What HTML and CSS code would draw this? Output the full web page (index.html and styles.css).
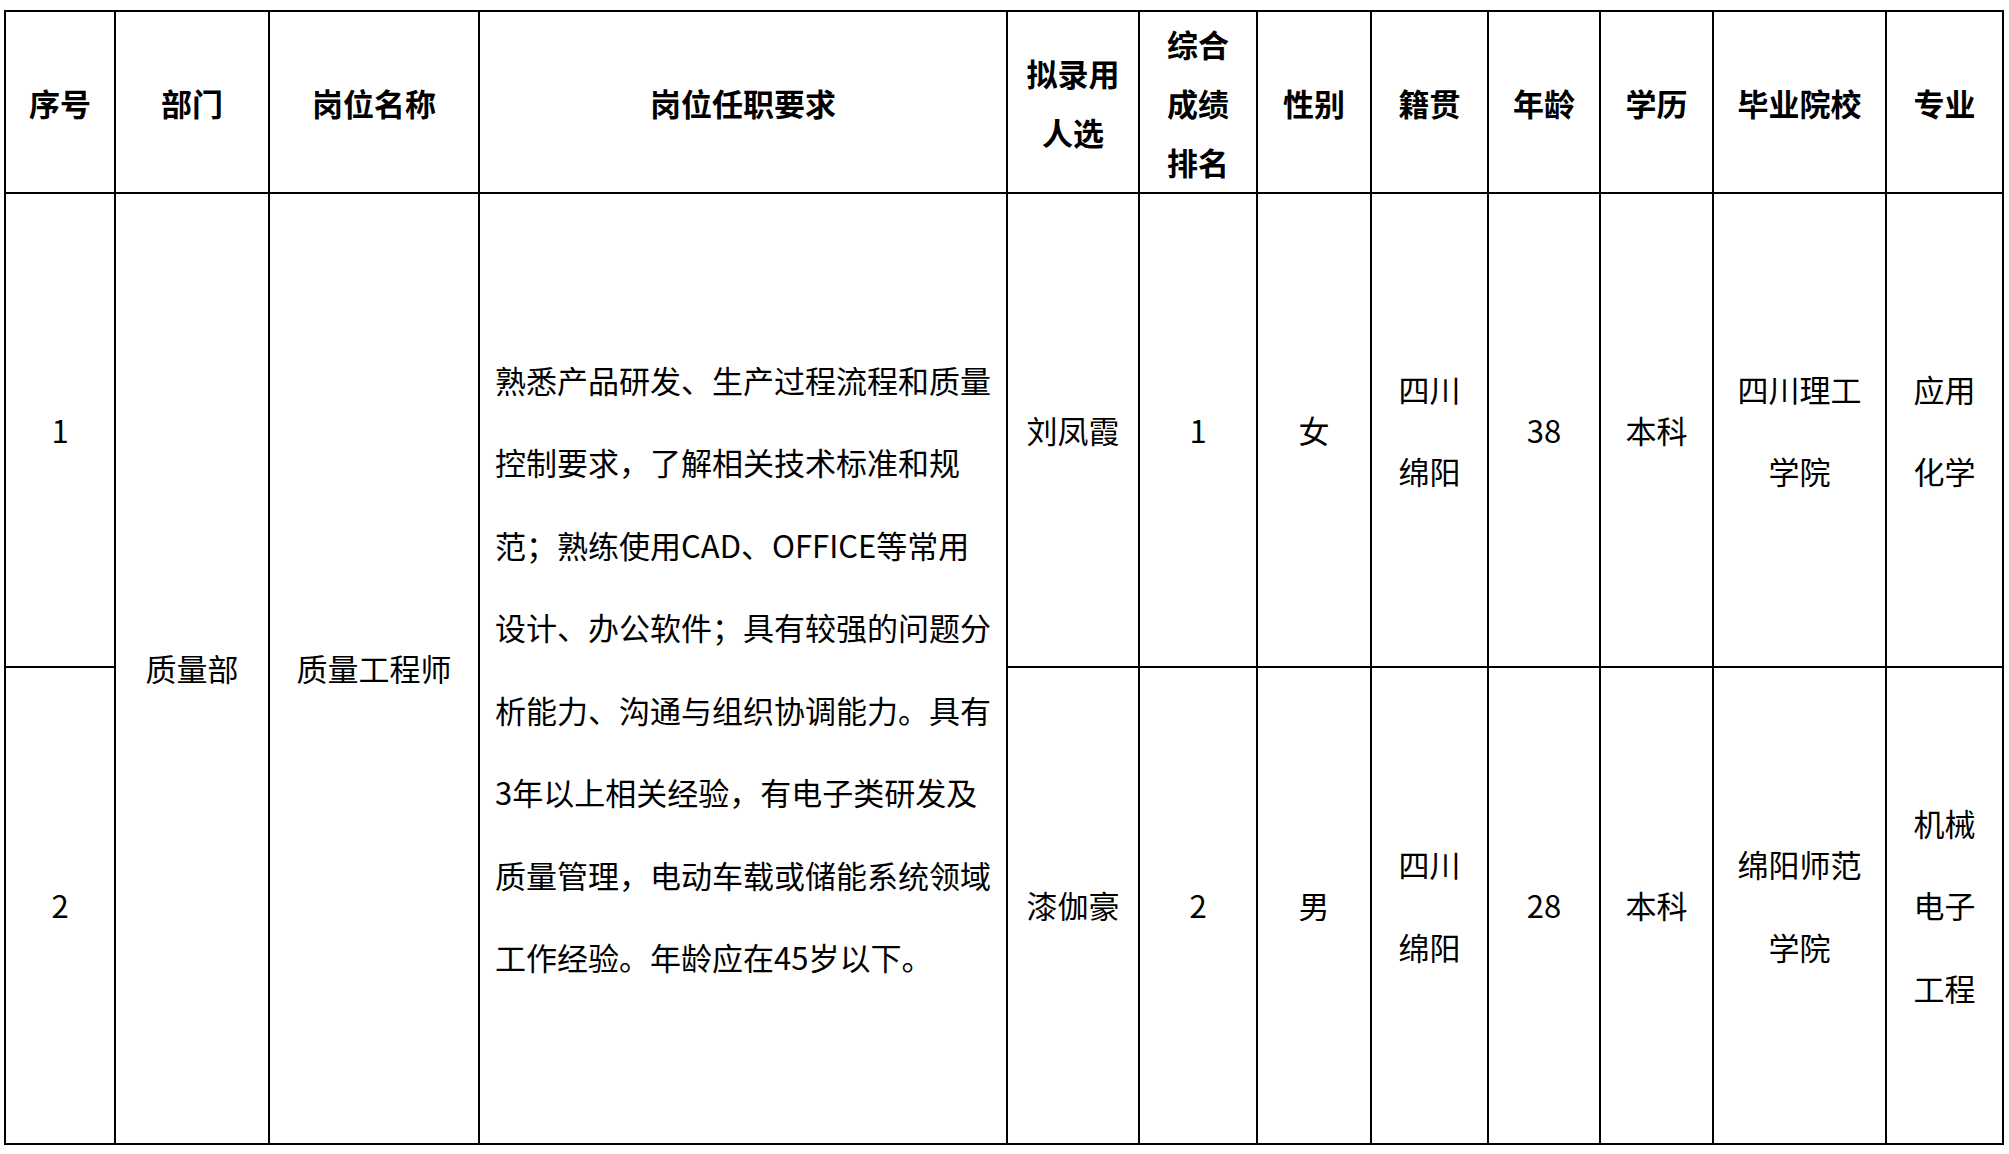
FILE: index.html
```html
<!DOCTYPE html>
<html lang="zh-CN">
<head>
<meta charset="utf-8">
<title>拟录用人选</title>
<link rel="stylesheet" href="styles.css">
</head>
<body>
<table class="grid">
  <colgroup>
    <col class="c-no"><col class="c-dept"><col class="c-post"><col class="c-req">
    <col class="c-name"><col class="c-rank"><col class="c-sex"><col class="c-home">
    <col class="c-age"><col class="c-edu"><col class="c-school"><col class="c-major">
  </colgroup>
  <thead>
    <tr class="head">
      <th>序号</th>
      <th>部门</th>
      <th>岗位名称</th>
      <th>岗位任职要求</th>
      <th>拟录用<br>人选</th>
      <th>综合<br>成绩<br>排名</th>
      <th>性别</th>
      <th>籍贯</th>
      <th>年龄</th>
      <th>学历</th>
      <th>毕业院校</th>
      <th>专业</th>
    </tr>
  </thead>
  <tbody>
    <tr class="row1">
      <td>1</td>
      <td rowspan="2">质量部</td>
      <td rowspan="2">质量工程师</td>
      <td rowspan="2" class="req">熟悉产品研发、生产过程流程和质量<br>控制要求，了解相关技术标准和规<br>范；熟练使用CAD、OFFICE等常用<br>设计、办公软件；具有较强的问题分<br>析能力、沟通与组织协调能力。具有<br>3年以上相关经验，有电子类研发及<br>质量管理，电动车载或储能系统领域<br>工作经验。年龄应在45岁以下。</td>
      <td>刘凤霞</td>
      <td>1</td>
      <td>女</td>
      <td>四川<br>绵阳</td>
      <td>38</td>
      <td>本科</td>
      <td>四川理工<br>学院</td>
      <td>应用<br>化学</td>
    </tr>
    <tr class="row2">
      <td>2</td>
      <td>漆伽豪</td>
      <td>2</td>
      <td>男</td>
      <td>四川<br>绵阳</td>
      <td>28</td>
      <td>本科</td>
      <td>绵阳师范<br>学院</td>
      <td>机械<br>电子<br>工程</td>
    </tr>
  </tbody>
</table>
</body>
</html>
```
FILE: styles.css
```css
html, body {
  margin: 0;
  padding: 0;
  background: #ffffff;
}
body {
  padding: 10px 0 0 4px;
  font-family: "Noto Sans CJK SC", "Microsoft YaHei", sans-serif;
  color: #000000;
}
.grid {
  border-collapse: collapse;
  table-layout: fixed;
  width: 2000px;
  font-size: 31px;
}
.grid th,
.grid td {
  border: 2px solid #000000;
  padding: 0;
  text-align: center;
  vertical-align: middle;
  white-space: nowrap;
}
.grid th {
  font-weight: 700;
  line-height: 59px;
}
.grid td {
  font-weight: 400;
  line-height: 82.5px;
}
.grid td.req {
  text-align: left;
  padding-left: 15px;
}
.head { height: 182px; }
.row1 { height: 474px; }
.row2 { height: 477px; }

.c-no { width: 110px; }
.c-dept { width: 154px; }
.c-post { width: 210px; }
.c-req { width: 528px; }
.c-name { width: 132px; }
.c-rank { width: 118px; }
.c-sex { width: 114px; }
.c-home { width: 117px; }
.c-age { width: 112px; }
.c-edu { width: 113px; }
.c-school { width: 173px; }
.c-major { width: 117px; }
```
